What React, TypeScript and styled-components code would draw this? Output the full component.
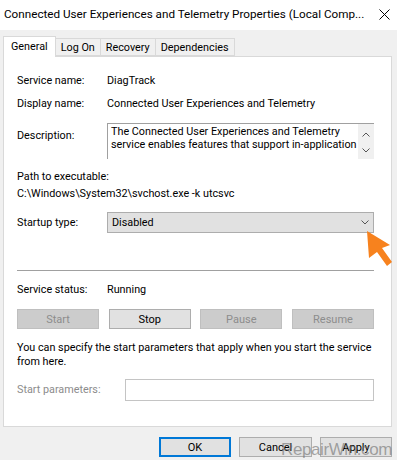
import styled, { createGlobalStyle } from "styled-components";

const GlobalStyle = createGlobalStyle`
  html, body {
    margin: 0;
    padding: 0;
  }
  body {
    width: 397px;
    height: 460px;
    overflow: hidden;
    background: #f0f0f0;
    font-family: Roboto, "Liberation Sans", sans-serif;
    font-size: 10.8px;
    color: #000;
  }
`;

const Window = styled.div`
  position: relative;
  width: 397px;
  height: 460px;
  background: #f0f0f0;
`;

const TitleBar = styled.div`
  height: 30px;
  background: #fff;
  display: flex;
  align-items: center;
  gap: 12px;
  padding: 0 7px 0 4px;
  box-sizing: border-box;
`;

const Title = styled.div`
  flex: 1;
  min-width: 0;
  overflow: hidden;
  font-size: 11.7px;
  white-space: nowrap;
  padding-bottom: 2px;
`;

const CloseIcon = styled.svg`
  flex: none;
  width: 11px;
  height: 11px;
  margin-bottom: 2px;
`;

const TabStrip = styled.div`
  display: flex;
  align-items: flex-end;
  height: 26px;
  padding-left: 3px;
`;

const Tab = styled.div<{ $active?: boolean }>`
  box-sizing: border-box;
  height: ${(p) => (p.$active ? "21px" : "18px")};
  padding: ${(p) => (p.$active ? "0 7px 2px" : "0 5px")};
  display: flex;
  align-items: center;
  justify-content: center;
  background: ${(p) => (p.$active ? "#fff" : "#f0f0f0")};
  border: 1px solid #d9d9d9;
  border-bottom: ${(p) => (p.$active ? "none" : "1px solid #d9d9d9")};
  border-left: ${(p) => (p.$active ? "1px solid #d9d9d9" : "none")};
  margin-bottom: ${(p) => (p.$active ? "-1px" : "0")};
  position: relative;
  z-index: ${(p) => (p.$active ? 1 : 0)};
`;

const Panel = styled.div`
  margin-left: 3px;
  width: 389px;
  height: 371px;
  box-sizing: border-box;
  background: #fff;
  border: 1px solid #d9d9d9;
  padding: 16px 17px 0 13px;
  display: flex;
  flex-direction: column;
`;

const Row = styled.div<{ $mt?: number; $h?: number }>`
  display: flex;
  align-items: center;
  margin-top: ${(p) => p.$mt ?? 0}px;
  height: ${(p) => p.$h ?? 16}px;
  line-height: 16px;
  white-space: nowrap;
`;

const Label = styled.div<{ $dim?: boolean }>`
  width: 90px;
  flex: none;
  color: ${(p) => (p.$dim ? "#8c8c8c" : "#000")};
`;

const TopLabel = styled(Label)`
  align-self: flex-start;
  padding-top: 5px;
`;

const DescBox = styled.div`
  flex: 1;
  height: 36px;
  box-sizing: border-box;
  border-top: 1px solid #a0a0a0;
  border-left: 1px solid #a0a0a0;
  display: flex;
  align-self: flex-start;
`;

const DescText = styled.div`
  flex: 1;
  padding: 2px 0 0 3px;
  line-height: 12.5px;
  white-space: normal;
  overflow: hidden;
`;

const ScrollBar = styled.div`
  width: 16px;
  background: #f0f0f0;
  display: flex;
  flex-direction: column;
  align-items: center;
  justify-content: space-between;
  padding: 8px 0 6px;
  box-sizing: border-box;
`;

const Chevron = styled.svg`
  width: 8px;
  height: 5px;
`;

const Combo = styled.div`
  flex: 1;
  height: 21px;
  box-sizing: border-box;
  background: #e1e1e1;
  border: 1px solid #adadad;
  display: flex;
  align-items: center;
  justify-content: space-between;
  padding: 0 4px;
`;

const Separator = styled.div`
  margin-top: 37px;
  height: 1px;
  background: #a0a0a0;
`;

const ButtonRow = styled.div`
  margin-top: 11px;
  display: flex;
  justify-content: space-between;
`;

const Button = styled.div<{ $disabled?: boolean; $default?: boolean; $w?: number }>`
  width: ${(p) => p.$w ?? 82}px;
  height: 20px;
  box-sizing: border-box;
  display: flex;
  align-items: center;
  justify-content: center;
  background: ${(p) => (p.$disabled ? "#cccccc" : "#e1e1e1")};
  border: ${(p) =>
    p.$default ? "2px solid #0078d7" : p.$disabled ? "1px solid #bfbfbf" : "1px solid #adadad"};
  color: ${(p) => (p.$disabled ? "#8d8d8d" : "#000")};
  font-size: 11px;
`;

const Info = styled.div`
  margin-top: 12px;
  margin-right: -12px;
  line-height: 13.5px;
`;

const ParamInput = styled.div`
  margin-left: 18px;
  flex: 1;
  height: 22px;
  box-sizing: border-box;
  border: 1px solid #c4c4c4;
`;

const Footer = styled.div`
  display: flex;
  justify-content: flex-end;
  gap: 8px;
  padding: 10px 5px 0 0;
`;

const Watermark = styled.div`
  position: absolute;
  left: 281px;
  top: 440px;
  font-family: "Liberation Sans", Arial, sans-serif;
  font-size: 17px;
  letter-spacing: -0.4px;
  color: rgba(110, 110, 110, 0.6);
  white-space: nowrap;
  pointer-events: none;
`;

const Pointer = styled.svg`
  position: absolute;
  left: 364px;
  top: 229px;
  width: 30px;
  height: 40px;
`;

const ChevronDown = () => (
  <Chevron viewBox="0 0 8 5">
    <path d="M0.5 0.5 L4 4 L7.5 0.5" fill="none" stroke="#555" strokeWidth="1" />
  </Chevron>
);

const ChevronUp = () => (
  <Chevron viewBox="0 0 8 5">
    <path d="M0.5 4.5 L4 1 L7.5 4.5" fill="none" stroke="#555" strokeWidth="1" />
  </Chevron>
);

export default function App() {
  return (
    <Window>
      <GlobalStyle />
      <TitleBar>
        <Title>Connected User Experiences and Telemetry Properties (Local Comp...</Title>
        <CloseIcon viewBox="0 0 11 11">
          <path d="M0.5 0.5 L10.5 10.5 M10.5 0.5 L0.5 10.5" stroke="#000" strokeWidth="1" />
        </CloseIcon>
      </TitleBar>

      <TabStrip>
        <Tab $active>General</Tab>
        <Tab>Log On</Tab>
        <Tab>Recovery</Tab>
        <Tab>Dependencies</Tab>
      </TabStrip>

      <Panel>
        <Row>
          <Label>Service name:</Label>
          DiagTrack
        </Row>
        <Row $mt={7}>
          <Label>Display name:</Label>
          Connected User Experiences and Telemetry
        </Row>
        <Row $mt={11} $h={36}>
          <TopLabel>Description:</TopLabel>
          <DescBox>
            <DescText>
              The Connected User Experiences and Telemetry service enables features that support
              in-application
            </DescText>
            <ScrollBar>
              <ChevronUp />
              <ChevronDown />
            </ScrollBar>
          </DescBox>
        </Row>
        <Row $mt={10}>Path to executable:</Row>
        <Row $mt={1}>C:\Windows\System32\svchost.exe -k utcsvc</Row>
        <Row $mt={10} $h={21}>
          <Label>Startup type:</Label>
          <Combo>
            Disabled
            <ChevronDown />
          </Combo>
        </Row>
        <Separator />
        <Row $mt={11}>
          <Label>Service status:</Label>
          Running
        </Row>
        <ButtonRow>
          <Button $disabled>Start</Button>
          <Button>Stop</Button>
          <Button $disabled>Pause</Button>
          <Button $disabled>Resume</Button>
        </ButtonRow>
        <Info>
          You can specify the start parameters that apply when you start the service
          <br />
          from here.
        </Info>
        <Row $mt={11} $h={22}>
          <Label $dim>Start parameters:</Label>
          <ParamInput />
        </Row>
      </Panel>

      <Footer>
        <Button $default $w={72}>
          OK
        </Button>
        <Button $w={73}>Cancel</Button>
        <Button $w={72}>Apply</Button>
      </Footer>

      <Watermark>RepairWin.com</Watermark>

      <Pointer viewBox="0 0 30 40">
        <polygon points="3,2 26,16 18,19 28,33 23,37 13,23 5,29" fill="#f7821e" />
      </Pointer>
    </Window>
  );
}
